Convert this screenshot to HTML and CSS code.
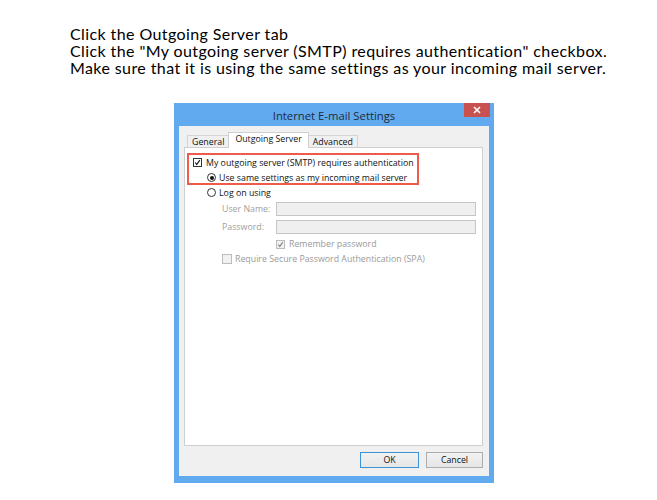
FILE: index.html
```html
<!DOCTYPE html>
<html>
<head>
<meta charset="utf-8">
<link rel="stylesheet" href="styles.css">
</head>
<body>
<div class="intro">
  <p>Click the Outgoing Server tab</p>
  <p>Click the "My outgoing server (SMTP) requires authentication" checkbox.</p>
  <p>Make sure that it is using the same settings as your incoming mail server.</p>
</div>
<div class="dialog">
  <div class="titlebar">
    <span class="title">Internet E-mail Settings</span>
    <span class="close"><svg width="8" height="8" viewBox="0 0 8 8"><path d="M1 1L7 7M7 1L1 7" stroke="#fff" stroke-width="1.6"/></svg></span>
  </div>
  <div class="client">
    <div class="tabs">
      <span class="tab">General</span>
      <span class="tab active">Outgoing Server</span>
      <span class="tab">Advanced</span>
    </div>
    <div class="panel">
      <div class="highlight">
        <div class="row first">
          <span class="check"><svg width="9" height="9" viewBox="0 0 9 9"><path d="M1.5 4.5L3.5 7L7.5 1.5" stroke="#222" stroke-width="1.5" fill="none"/></svg></span>
          <span>My outgoing server (SMTP) requires authentication</span>
        </div>
        <div class="row indent">
          <span class="radio on"></span>
          <span>Use same settings as my incoming mail server</span>
        </div>
      </div>
      <div class="row logon">
        <span class="radio"></span>
        <span>Log on using</span>
      </div>
      <div class="field">
        <span class="lbl">User Name:</span>
        <span class="input"></span>
      </div>
      <div class="field">
        <span class="lbl">Password:</span>
        <span class="input"></span>
      </div>
      <div class="row remember disabled">
        <span class="check dis"><svg width="9" height="9" viewBox="0 0 9 9"><path d="M1.5 4.5L3.5 7L7.5 1.5" stroke="#8a8a8a" stroke-width="1.5" fill="none"/></svg></span>
        <span>Remember password</span>
      </div>
      <div class="row spa disabled">
        <span class="check dis big"></span>
        <span>Require Secure Password Authentication (SPA)</span>
      </div>
    </div>
    <div class="buttons">
      <span class="btn default">OK</span>
      <span class="btn cancel">Cancel</span>
    </div>
  </div>
</div>
</body>
</html>
```
FILE: styles.css
```css
html, body {
  margin: 0;
  padding: 0;
  background: #fff;
}
.intro {
  padding: 25px 0 0 70px;
  font-family: Lato, "Open Sans", sans-serif;
  font-size: 16px;
  line-height: 17px;
  letter-spacing: 0.4px;
  color: #000;
}
.intro p {
  margin: 0;
  white-space: nowrap;
}
.dialog {
  margin: 27px 0 0 174px;
  width: 320px;
  height: 380px;
  box-sizing: border-box;
  background: #62aaf0;
  padding: 0 5px 7px 5px;
  display: flex;
  flex-direction: column;
  font-family: "Open Sans", "Noto Sans", sans-serif;
  white-space: nowrap;
}
.titlebar {
  height: 23px;
  display: flex;
  align-items: center;
  justify-content: center;
  position: relative;
}
.title {
  font-size: 11.3px;
  color: #1e2a36;
  margin-top: 1px;
}
.close {
  position: absolute;
  right: -1px;
  top: 0;
  width: 26px;
  height: 14px;
  background: #c9514f;
  display: flex;
  align-items: center;
  justify-content: center;
}
.client {
  flex: 1;
  background: #f0f0f0;
  display: flex;
  flex-direction: column;
  padding: 0 6px 0 5px;
}
.tabs {
  display: flex;
  align-items: flex-end;
  height: 22px;
  padding-left: 3px;
  font-size: 8.8px;
  color: #111;
}
.tab {
  border: 1px solid #d4d4d4;
  border-bottom: none;
  background: #f0f0f0;
  height: 12px;
  line-height: 12px;
  padding: 0 4px;
}
.tab.active {
  background: #fff;
  height: 15px;
  line-height: 13px;
  padding: 0 6px;
  margin: 0 -1px;
  position: relative;
  z-index: 1;
  border-color: #d0d0d0;
}
.panel {
  height: 299px;
  box-sizing: border-box;
  background: #fff;
  border: 1px solid #cfcfcf;
  margin-top: -1px;
  font-size: 8.8px;
  color: #111;
  padding: 5px 0 0 2px;
  display: flex;
  flex-direction: column;
}
.highlight {
  width: 232px;
  height: 32px;
  box-sizing: border-box;
  border: 2px solid #ee5b4a;
  padding: 0 0 0 4px;
}
.row {
  display: flex;
  align-items: center;
  gap: 4px;
  height: 15px;
}
.row.indent {
  padding-left: 14px;
  gap: 3px;
}
.logon {
  padding-left: 20px;
  gap: 3px;
}
.check {
  width: 7px;
  height: 7px;
  border: 1px solid #333;
  background: #fff;
  display: flex;
  align-items: center;
  justify-content: center;
}
.check.dis {
  border-color: #bcbcbc;
  background: #f2f2f2;
}
.check.big {
  width: 8px;
  height: 8px;
}
.radio {
  width: 9px;
  height: 9px;
  border: 1px solid #333;
  border-radius: 50%;
  background: #fff;
  box-sizing: border-box;
  position: relative;
}
.radio.on::after {
  content: "";
  position: absolute;
  left: 1.5px;
  top: 1.5px;
  width: 4px;
  height: 4px;
  border-radius: 50%;
  background: #111;
}
.field {
  display: flex;
  align-items: center;
  height: 18px;
  padding-left: 35px;
  color: #a0a0a0;
}
.lbl {
  width: 54px;
}
.input {
  width: 198px;
  height: 12px;
  border: 1px solid #c6c6c6;
  background: #efefef;
}
.disabled {
  color: #9a9a9a;
}
.remember {
  padding-left: 89px;
  height: 16px;
}
.spa {
  padding-left: 35px;
  height: 14px;
  gap: 3px;
}
.buttons {
  display: flex;
  justify-content: flex-end;
  gap: 7px;
  padding-top: 6px;
  font-size: 8.8px;
  color: #111;
}
.btn {
  width: 57px;
  height: 14px;
  line-height: 14px;
  text-align: center;
  border: 1px solid #adadad;
  background: linear-gradient(#f2f2f2, #e6e6e6);
}
.btn.cancel {
  width: 55px;
}
.btn.default {
  border-color: #3c93d6;
}
```
